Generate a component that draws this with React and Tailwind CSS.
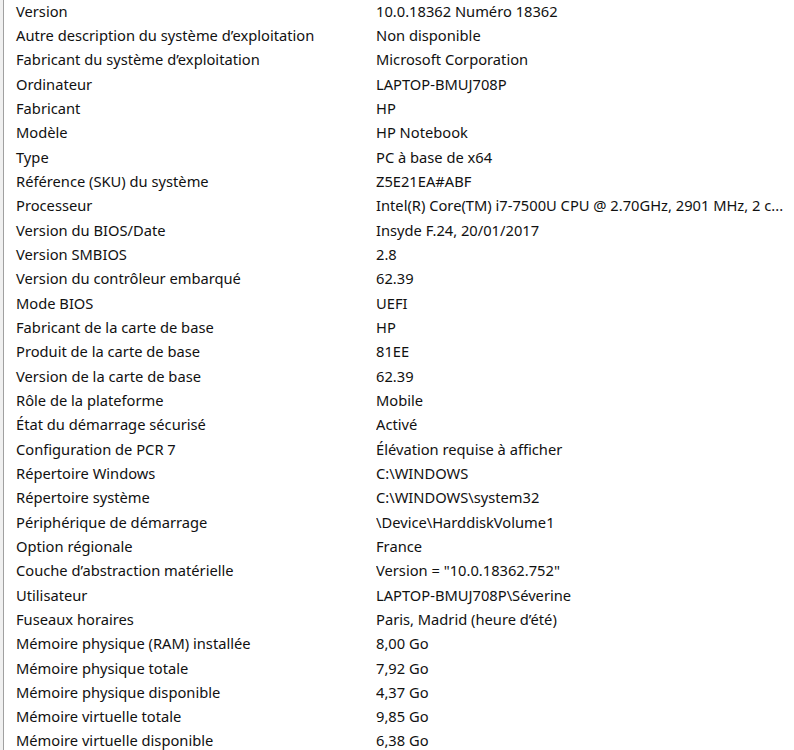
import React from "react";

const rows = [
  ["Version", "10.0.18362 Numéro 18362"],
  ["Autre description du système d’exploitation", "Non disponible"],
  ["Fabricant du système d’exploitation", "Microsoft Corporation"],
  ["Ordinateur", "LAPTOP-BMUJ708P"],
  ["Fabricant", "HP"],
  ["Modèle", "HP Notebook"],
  ["Type", "PC à base de x64"],
  ["Référence (SKU) du système", "Z5E21EA#ABF"],
  ["Processeur", "Intel(R) Core(TM) i7-7500U CPU @ 2.70GHz, 2901 MHz, 2 c..."],
  ["Version du BIOS/Date", "Insyde F.24, 20/01/2017"],
  ["Version SMBIOS", "2.8"],
  ["Version du contrôleur embarqué", "62.39"],
  ["Mode BIOS", "UEFI"],
  ["Fabricant de la carte de base", "HP"],
  ["Produit de la carte de base", "81EE"],
  ["Version de la carte de base", "62.39"],
  ["Rôle de la plateforme", "Mobile"],
  ["État du démarrage sécurisé", "Activé"],
  ["Configuration de PCR 7", "Élévation requise à afficher"],
  ["Répertoire Windows", "C:\\WINDOWS"],
  ["Répertoire système", "C:\\WINDOWS\\system32"],
  ["Périphérique de démarrage", "\\Device\\HarddiskVolume1"],
  ["Option régionale", "France"],
  ["Couche d’abstraction matérielle", "Version = \"10.0.18362.752\""],
  ["Utilisateur", "LAPTOP-BMUJ708P\\Séverine"],
  ["Fuseaux horaires", "Paris, Madrid (heure d’été)"],
  ["Mémoire physique (RAM) installée", "8,00 Go"],
  ["Mémoire physique totale", "7,92 Go"],
  ["Mémoire physique disponible", "4,37 Go"],
  ["Mémoire virtuelle totale", "9,85 Go"],
  ["Mémoire virtuelle disponible", "6,38 Go"],
];

export default function App() {
  return (
    <div className="w-[794px] h-[750px] overflow-hidden bg-white flex">
      <div className="w-[3px] bg-[#f0f0f0]"></div>
      <div className="w-[1px] bg-[#a0a0a0]"></div>
      <div className="flex-1 -mt-[1.5px] text-[14.7px] text-[#111] font-['Noto_Sans',sans-serif]">
        {rows.map(([label, value], i) => (
          <div key={i} className="flex h-[24.33px] items-center whitespace-nowrap">
            <div className="w-[372px] pl-[12px]">{label}</div>
            <div className="flex-1 overflow-hidden">{value}</div>
          </div>
        ))}
      </div>
    </div>
  );
}
